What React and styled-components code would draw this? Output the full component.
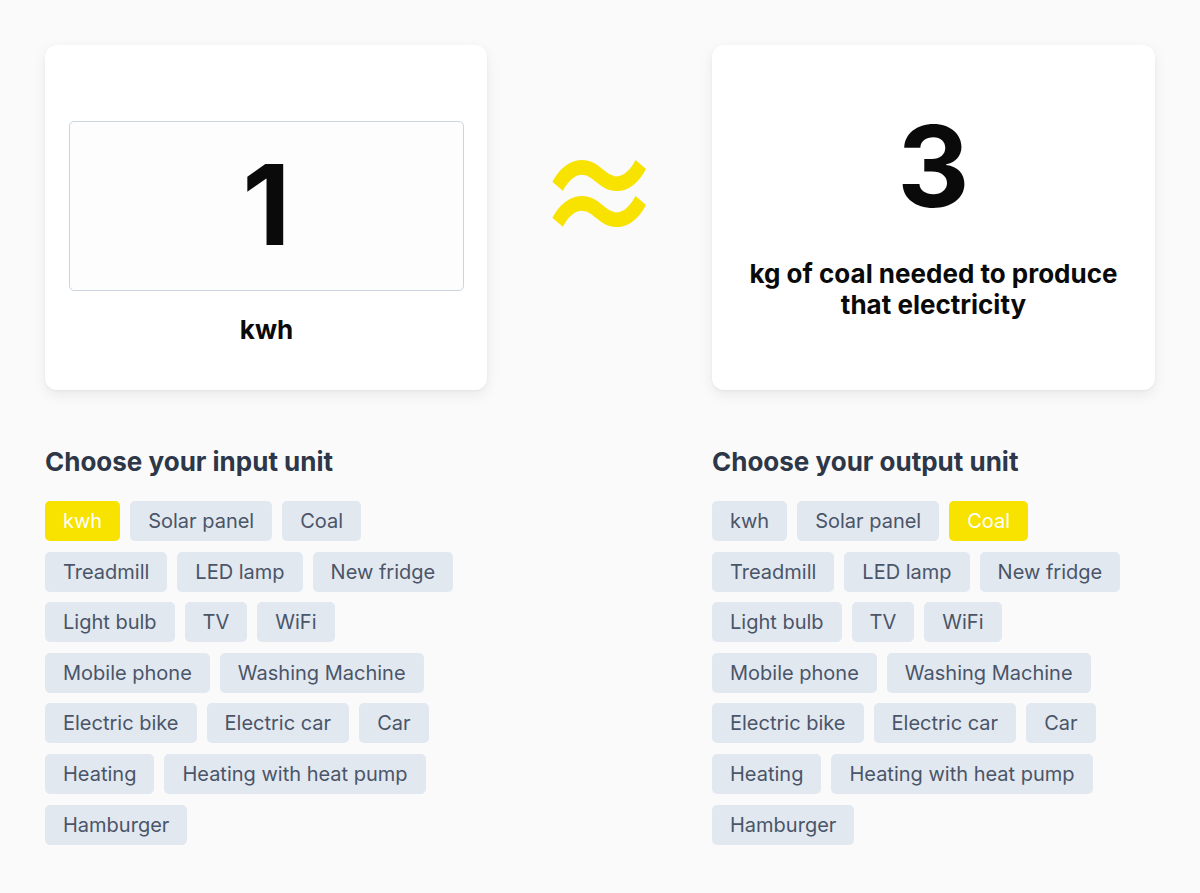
import React, { useState } from 'react'
import styled, { createGlobalStyle } from 'styled-components'

const colors = {
  page: '#fafafa',
  card: '#ffffff',
  yellow: '#f7e200',
  tag: '#e2e8f0',
  tagText: '#4a5568',
  heading: '#2d3748',
  border: '#cbd5e0',
}

const units = [
  'kwh', 'Solar panel', 'Coal', 'Treadmill', 'LED lamp', 'New fridge',
  'Light bulb', 'TV', 'WiFi', 'Mobile phone', 'Washing Machine',
  'Electric bike', 'Electric car', 'Car', 'Heating', 'Heating with heat pump',
  'Hamburger',
]

const GlobalStyle = createGlobalStyle`
  body {
    margin: 0;
    background: ${colors.page};
    font-family: Inter, "Noto Sans", sans-serif;
  }
`

const Page = styled.main`
  width: 1110px;
  margin: 0 auto;
  padding-top: 45px;
  display: grid;
  grid-template-columns: 442px 1fr 443px;
  row-gap: 56px;
`

const Card = styled.section`
  height: 345px;
  box-sizing: border-box;
  background: ${colors.card};
  border-radius: 12px;
  box-shadow: 0 5px 14px rgba(0, 0, 0, 0.07), 0 1px 3px rgba(0, 0, 0, 0.04);
  display: flex;
  flex-direction: column;
  align-items: center;
  justify-content: ${props => props.centered ? 'center' : 'flex-start'};
  padding: ${props => props.centered ? '0 24px 5px' : '76px 23px 0 24px'};
`

const NumberInput = styled.input`
  width: 100%;
  height: 170px;
  box-sizing: border-box;
  border: 1px solid ${colors.border};
  border-radius: 5px;
  background: #fdfdfd;
  text-align: center;
  font-family: Inter, sans-serif;
  font-weight: 700;
  font-size: 112px;
  color: #0a0a0a;
  outline: none;
  padding: 0 0 4px;
`

const BigNumber = styled.div`
  font-weight: 700;
  font-size: 112px;
  line-height: 1;
  color: #0a0a0a;
`

const UnitLabel = styled.div`
  margin-top: ${props => props.mt || 0}px;
  font-weight: 700;
  font-size: 26px;
  line-height: 31px;
  color: #0a0a0a;
  text-align: center;
`

const Approx = styled.div`
  display: flex;
  justify-content: center;
  align-items: flex-start;
  padding-top: 78px;
  color: ${colors.yellow};
  font-family: "Noto Sans CJK SC", Inter, sans-serif;
  font-weight: 700;
  font-size: 128px;
  line-height: 1;

  span {
    display: inline-block;
    transform: scaleY(1.12);
    transform-origin: 50% 52%;
  }
`

const Section = styled.div`
  grid-column: ${props => props.col};
`

const Heading = styled.h2`
  margin: 0 0 23px;
  font-size: 26px;
  font-weight: 700;
  line-height: 32px;
  color: ${colors.heading};
`

const Tags = styled.div`
  display: flex;
  flex-wrap: wrap;
  gap: 10.6px 10px;
`

const Tag = styled.button`
  height: 40px;
  padding: 0 18px;
  border: none;
  border-radius: 5px;
  font-family: Inter, sans-serif;
  font-size: 20px;
  cursor: pointer;
  background: ${props => props.active ? colors.yellow : colors.tag};
  color: ${props => props.active ? '#ffffff' : colors.tagText};
`

function UnitPicker({ title, col, selected, onSelect }) {
  return (
    <Section col={col}>
      <Heading>{title}</Heading>
      <Tags>
        {units.map(u => (
          <Tag key={u} active={u === selected} onClick={() => onSelect(u)}>{u}</Tag>
        ))}
      </Tags>
    </Section>
  )
}

export default function App() {
  const [input, setInput] = useState('kwh')
  const [output, setOutput] = useState('Coal')

  return (
    <>
      <GlobalStyle />
      <Page>
        <Card>
          <NumberInput readOnly value="1" />
          <UnitLabel mt={23}>kwh</UnitLabel>
        </Card>
        <Approx><span>≈</span></Approx>
        <Card centered>
          <BigNumber>3</BigNumber>
          <UnitLabel mt={36}>kg of coal needed to produce<br />that electricity</UnitLabel>
        </Card>
        <UnitPicker title="Choose your input unit" col="1" selected={input} onSelect={setInput} />
        <UnitPicker title="Choose your output unit" col="3" selected={output} onSelect={setOutput} />
      </Page>
    </>
  )
}
